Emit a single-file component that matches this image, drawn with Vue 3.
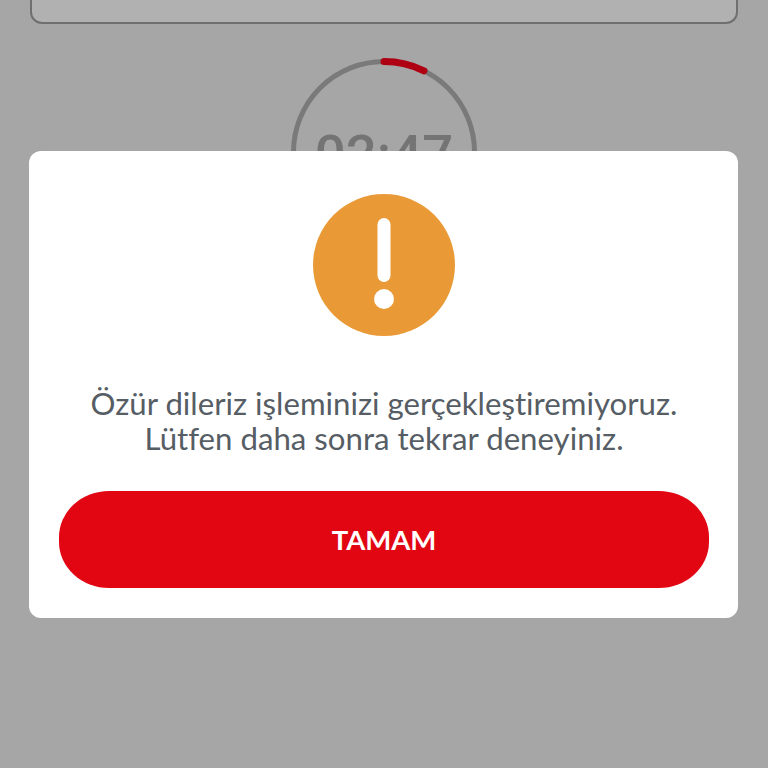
<template>
  <div class="screen">

    <!-- TOP CARD -->
    <div class="top-card"></div>

    <!-- TIMER -->
    <div class="timer">
      <svg class="timer-ring" width="190" height="190" viewBox="0 0 190 190">
        <circle cx="95" cy="95" r="90.5" fill="none" stroke="#7a7a7a" stroke-width="5" />
        <path
          d="M95 4.5 A90.5 90.5 0 0 1 135 13.8"
          fill="none"
          stroke="#ae0012"
          stroke-width="7"
          stroke-linecap="round"
        />
      </svg>
      <span class="timer-text">02:47</span>
    </div>

    <!-- DIALOG -->
    <div class="dialog">
      <svg class="dialog-icon" width="142" height="142" viewBox="0 0 142 142">
        <circle cx="71" cy="71" r="71" fill="#e99a36" />
        <rect x="64.5" y="24" width="13" height="64" rx="6.5" fill="#fff" />
        <circle cx="71" cy="105" r="10" fill="#fff" />
      </svg>

      <p class="dialog-text">
        Özür dileriz işleminizi gerçekleştiremiyoruz.<br />
        Lütfen daha sonra tekrar deneyiniz.
      </p>

      <button class="dialog-button" type="button">TAMAM</button>
    </div>

  </div>
</template>

<script setup>
</script>

<style>
html,
body {
  margin: 0;
  background: #a6a6a6;
}
</style>

<style scoped>
.screen {
  position: relative;
  width: 768px;
  height: 768px;
  overflow: hidden;
  background: #a6a6a6;
  font-family: Lato, "Liberation Sans", sans-serif;
}

/* TOP CARD */

.top-card {
  box-sizing: border-box;
  width: 708px;
  height: 24px;
  margin-left: 30px;
  background: #b1b1b1;
  border: 2px solid #6f6f6f;
  border-top: none;
  border-radius: 0 0 12px 12px;
}

/* TIMER */

.timer {
  position: relative;
  width: 190px;
  height: 190px;
  margin: 33px auto 0;
}

.timer-ring {
  display: block;
}

.timer-text {
  position: absolute;
  top: 65px;
  left: 0;
  width: 100%;
  text-align: center;
  font-family: Roboto, sans-serif;
  font-size: 54.5px;
  font-weight: 500;
  line-height: 64px;
  color: #747474;
}

/* DIALOG */

.dialog {
  position: absolute;
  top: 151px;
  left: 29px;
  box-sizing: border-box;
  width: 709px;
  height: 467px;
  padding: 43px 29px 0 30px;
  display: flex;
  flex-direction: column;
  align-items: center;
  background: #ffffff;
  border-radius: 12px;
}

.dialog-icon {
  display: block;
  flex-shrink: 0;
}

.dialog-text {
  margin: 50px 0 0;
  font-size: 31.2px;
  font-variant-ligatures: none;
  line-height: 35px;
  text-align: center;
  color: #565d64;
}

.dialog-button {
  flex-shrink: 0;
  width: 650px;
  height: 97px;
  margin-top: 35px;
  border: none;
  border-radius: 50px / 46px;
  background: #e20613;
  color: #ffffff;
  font-family: inherit;
  font-size: 27.5px;
  font-weight: 700;
}
</style>
